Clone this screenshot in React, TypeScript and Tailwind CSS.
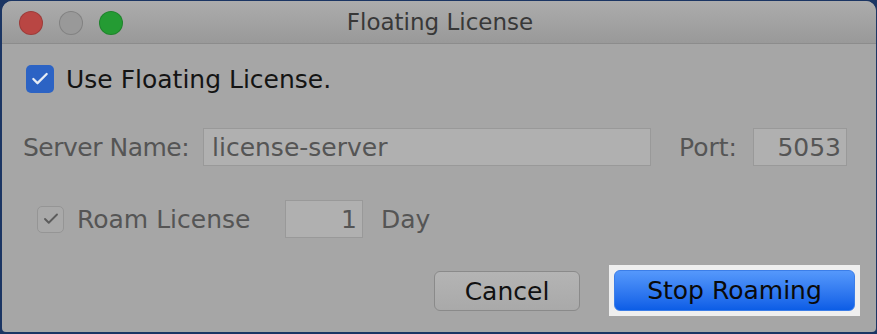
import { Check } from 'lucide-react'

const font = { fontFamily: '"DejaVu Sans", "Liberation Sans", sans-serif' }

function Light({ color }: { color: string }) {
  return <div className={`h-6 w-6 rounded-full border border-black/15 ${color}`} />
}

export default function App() {
  return (
    <div className="h-[334px] w-[877px] bg-[#1b3563] pl-[2px] pt-px" style={font}>
      <div className="flex h-[331px] w-[874px] flex-col overflow-hidden rounded-t-[10px] rounded-b-[4px] bg-[#a6a6a6]">
        <div className="relative flex h-[43px] items-center border-b border-[#8c8c8c] bg-gradient-to-b from-[#acacac] to-[#999999] pl-[17px] pt-[2px]">
          <div className="flex gap-[16px]">
            <Light color="bg-[#b94643]" />
            <Light color="bg-[#999999]" />
            <Light color="bg-[#249b33]" />
          </div>
          <div className="absolute inset-0 flex items-center justify-center pt-[1px] pl-[2px] text-[23px] leading-none text-[#383838]">
            Floating License
          </div>
        </div>

        <div className="flex flex-1 flex-col px-[20px] leading-none">
          <div className="mt-[21px] flex h-[28px] items-center gap-[12px] pl-[4px]">
            <div className="flex h-[28px] w-[28px] items-center justify-center rounded-[5px] bg-[#2c63c4]">
              <Check className="h-[20px] w-[20px] text-[#e6ecf5]" strokeWidth={2.75} />
            </div>
            <span className="text-[25px] text-[#141414]">Use Floating License.</span>
          </div>

          <div className="mt-[35px] flex h-[38px] items-center text-[25px] text-[#555555]">
            <span className="w-[181px] pl-[1px] tracking-[-0.5px]">Server Name:</span>
            <div className="flex h-[38px] w-[448px] items-center border border-[#999999] bg-[#b0b0b0] px-[8px]">
              license-server
            </div>
            <span className="ml-[28px] w-[74px]">Port:</span>
            <div className="flex h-[38px] w-[94px] items-center justify-end border border-[#999999] bg-[#b0b0b0] px-[5px]">
              5053
            </div>
          </div>

          <div className="mt-[34px] flex h-[38px] items-center pl-[15px] text-[25px] text-[#555555]">
            <div className="flex h-[27px] w-[27px] items-center justify-center rounded-[5px] border border-[#959595] bg-[#a9a9a9]">
              <Check className="h-[18px] w-[18px] text-[#5c5c5c]" strokeWidth={2.5} />
            </div>
            <span className="ml-[13px] w-[208px]">Roam License</span>
            <div className="flex h-[38px] w-[78px] items-center justify-end border border-[#999999] bg-[#b0b0b0] px-[5px]">
              1
            </div>
            <span className="ml-[18px]">Day</span>
          </div>

          <div className="mt-[27px] -mr-[4px] flex items-center justify-end gap-[29px]">
            <div className="mt-[1px] flex h-[40px] w-[146px] items-center justify-center rounded-[6px] border border-[#8a8a8a] bg-gradient-to-b from-[#b4b4b4] to-[#a9a9a9] text-[25px] text-[#111111]">
              Cancel
            </div>
            <div className="bg-[#efefef] p-[5px]">
              <div className="flex h-[41px] w-[241px] items-center justify-center rounded-[6px] border border-[#3c7ee8] bg-gradient-to-b from-[#5598fb] to-[#0b5de6] text-[25px] text-[#0a0a0a]">
                Stop Roaming
              </div>
            </div>
          </div>
        </div>
      </div>
    </div>
  )
}
